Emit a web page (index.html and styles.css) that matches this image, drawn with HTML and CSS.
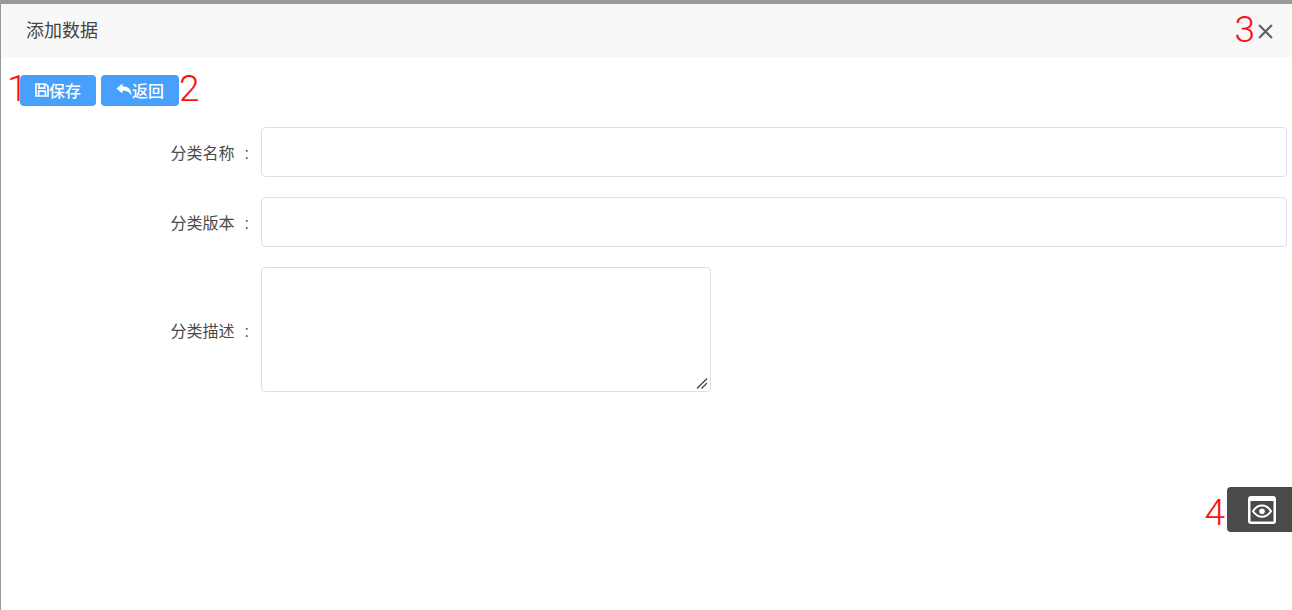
FILE: index.html
```html
<!DOCTYPE html>
<html lang="zh-CN">
<head>
<meta charset="utf-8">
<title>添加数据</title>
<link rel="stylesheet" href="styles.css">
</head>
<body>
<div class="edge-noise">
  <i class="speck speck-a"></i>
  <i class="speck speck-b"></i>
  <i class="speck speck-c"></i>
  <i class="speck speck-d"></i>
  <i class="speck speck-e"></i>
  <i class="speck speck-f"></i>
</div>
<div class="dialog">
  <header class="dialog-head">
    <h1 class="dialog-title">添加数据</h1>
    <span class="mark mark-3">3</span>
    <button class="close" type="button" aria-label="关闭">
      <svg width="15" height="15" viewBox="0 0 14 14"><path d="M1 1 13 13M13 1 1 13" stroke="#5d6068" stroke-width="2" fill="none"/></svg>
    </button>
  </header>
  <div class="toolbar">
    <span class="mark mark-1">1</span>
    <button class="btn btn-save" type="button">
      <svg class="ico" width="14" height="14" viewBox="0 0 14 14" fill="none" stroke="#fff" stroke-width="1.7"><path d="M1 1H10.6L13 3.4V13H1Z"/><path d="M4 1V5.2H9.6V1M3.6 13V8.2H10.4V13"/></svg>保存
    </button>
    <button class="btn btn-back" type="button">
      <svg class="ico" width="16" height="14" viewBox="0 0 16 14"><path d="M0.5 5.5 6.5 0.5V3.3C12 3.3 15.5 6 15.5 13C14 9.6 11.5 7.8 6.5 7.8V10.6Z" fill="#fff"/></svg>返回
    </button>
    <span class="mark mark-2">2</span>
  </div>
  <form class="form">
    <div class="row">
      <label class="label" for="f-name">分类名称<span class="colon">:</span></label>
      <input class="input" id="f-name" type="text">
    </div>
    <div class="row">
      <label class="label" for="f-ver">分类版本<span class="colon">:</span></label>
      <input class="input" id="f-ver" type="text">
    </div>
    <div class="row">
      <label class="label" for="f-desc">分类描述<span class="colon">:</span></label>
      <textarea class="textarea" id="f-desc"></textarea>
    </div>
  </form>
</div>
<span class="mark mark-4">4</span>
<button class="float-panel" type="button" aria-label="预览">
  <svg width="28" height="28" viewBox="0 0 28 28"><rect x="0" y="0" width="28" height="28" rx="3" fill="#fff"/><rect x="2.5" y="5" width="23" height="20.5" fill="#4a4a4a"/><path d="M5 15.2C8 10.6 11 9.6 14 9.6S20 10.6 23 15.2C20 19.6 17 20.8 14 20.8S8 19.6 5 15.2Z" fill="none" stroke="#fff" stroke-width="2"/><circle cx="14" cy="15.2" r="2.8" fill="#fff"/></svg>
</button>
</body>
</html>
```
FILE: styles.css
```css
* { box-sizing: border-box; }
html, body { margin: 0; height: 100%; }
body {
  background: #fff;
  font-family: "Noto Sans CJK SC", "Liberation Sans", sans-serif;
  color: #444;
  overflow: hidden;
  border-top: 4px solid #999;
  border-left: 1px solid #999;
  position: relative;
}
.edge-noise {
  position: absolute;
  left: -1px;
  top: 0;
  width: 1px;
  height: 100%;
  z-index: 2;
}
.speck {
  position: absolute;
  left: 0;
  width: 1px;
  background: repeating-linear-gradient(#222 0 1px, #b98a3c 1px 2px, #999 2px 4px);
}
.speck-a { top: 162px; height: 10px; }
.speck-b { top: 213px; height: 12px; }
.speck-c { top: 238px; height: 12px; }
.speck-d { top: 263px; height: 12px; }
.speck-e { top: 288px; height: 12px; }
.speck-f { top: 413px; height: 11px; }
.dialog-head {
  height: 53px;
  background: #f8f8f8;
  display: flex;
  align-items: center;
  padding: 0 19px 3px 25px;
  position: relative;
}
.dialog-title {
  flex: 1;
  margin: 0;
  font-size: 18px;
  font-weight: 400;
  color: #444;
}
.close {
  border: 0;
  background: none;
  padding: 0;
  width: 15px;
  height: 15px;
  display: block;
  margin-top: 5px;
}
.close svg { display: block; }
.toolbar {
  display: flex;
  gap: 5px;
  padding: 18px 0 0 19px;
  position: relative;
}
.btn {
  height: 31px;
  border: 0;
  border-radius: 4px;
  background: #46a0fc;
  color: #fff;
  font: 500 16px "Noto Sans CJK SC", "Liberation Sans", sans-serif;
  display: flex;
  align-items: center;
  justify-content: center;
  padding: 0 0 2px;
}
.btn-save { width: 76px; }
.btn-back { width: 78px; }
.ico { flex: none; }
.form {
  display: flex;
  flex-direction: column;
  gap: 20px;
  padding: 21px 5px 0 0;
}
.row {
  display: flex;
  align-items: center;
}
.label {
  width: 260px;
  padding-right: 12px;
  text-align: right;
  font-size: 16px;
  color: #4a4a4a;
  flex: none;
  white-space: nowrap;
}
.colon {
  font-family: "Liberation Sans", sans-serif;
  margin-left: 10px;
}
.input, .textarea {
  border: 1px solid #dcdfe6;
  border-radius: 4px;
  background: #fff;
  display: block;
}
.input { flex: 1; height: 50px; }
.textarea { width: 450px; height: 125px; }
.textarea::-webkit-resizer {
  background: url("data:image/svg+xml,%3Csvg xmlns='http://www.w3.org/2000/svg' width='15' height='15'%3E%3Cpath d='M2 12.5 12 2.5M6.5 12.5 12 7' stroke='%23444' stroke-width='1.3'/%3E%3C/svg%3E") no-repeat;
}
.mark {
  position: absolute;
  color: #ff0f0f;
  font-family: Roboto, "Liberation Sans", sans-serif;
  font-weight: 300;
  font-size: 37px;
  line-height: 1;
}
.mark-1 { left: 6px; top: 13px; }
.mark-2 { left: 178px; top: 13px; }
.mark-3 { right: 37px; top: 7px; }
.mark-4 { right: 67px; top: 490px; }
.float-panel {
  position: absolute;
  right: 0;
  top: 483px;
  width: 65px;
  height: 45px;
  border: 0;
  padding: 0 0 0 5px;
  border-radius: 4px 0 0 4px;
  background: #4a4a4a;
  display: flex;
  align-items: center;
  justify-content: center;
}
.float-panel svg { display: block; }
```
